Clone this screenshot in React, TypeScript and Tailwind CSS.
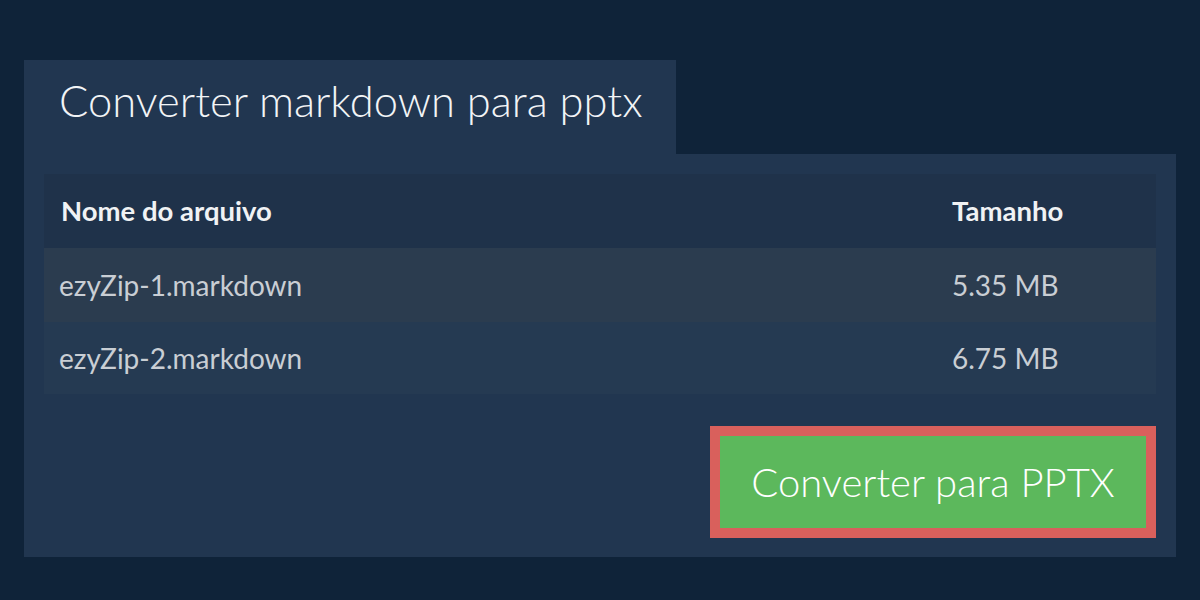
import React from "react";

type FileRow = {
  name: string;
  size: string;
};

const FILES: FileRow[] = [
  { name: "ezyZip-1.markdown", size: "5.35 MB" },
  { name: "ezyZip-2.markdown", size: "6.75 MB" },
];

const App = () => {
  return (
    <div
      className="w-[1200px] h-[600px] bg-[#0f2339] px-6 pt-[60px]"
      style={{ fontFamily: "Lato, 'Open Sans', sans-serif" }}
    >
      {/* Tab title */}
      <div className="w-[652px] h-[94px] bg-[#213650] pl-[35px] pt-[12px]">
        <h1 className="text-[43.5px] font-light text-[#f2f4f6] leading-[56px]">
          Converter markdown para pptx
        </h1>
      </div>

      {/* Panel */}
      <div className="bg-[#213650] px-5 pt-5 pb-[19px]">
        <div className="w-full">
          <div className="grid grid-cols-[891px_1fr] h-[74px] items-center bg-[#1f324a] text-[27.5px] font-bold text-[#f0f2f4]">
            <div className="pl-[17px]">Nome do arquivo</div>
            <div className="pl-[17px]">Tamanho</div>
          </div>
          {FILES.map((file, i) => (
            <div
              key={file.name}
              className={
                i % 2 === 0
                  ? "grid grid-cols-[891px_1fr] h-[74px] items-center bg-[#2b3c4f] text-[28px] text-[#c9ced4]"
                  : "grid grid-cols-[891px_1fr] h-[72px] items-center bg-[#253a52] text-[28px] text-[#c9ced4]"
              }
            >
              <div className="pl-[15px]">{file.name}</div>
              <div className="pl-[17px]">{file.size}</div>
            </div>
          ))}
        </div>

        <div className="flex justify-end mt-[32px]">
          <button className="w-[446px] h-[112px] border-[10px] border-[#d9605c] bg-[#5cb85c] text-white text-[40px] font-light">
            Converter para PPTX
          </button>
        </div>
      </div>
    </div>
  );
};

export default App;
